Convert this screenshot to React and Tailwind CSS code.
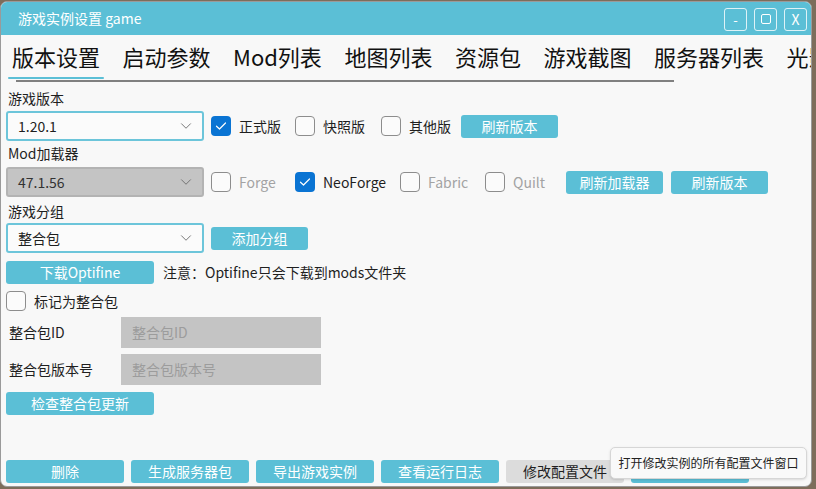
import { ChevronDown } from "lucide-react";

const tabs = ["版本设置", "启动参数", "Mod列表", "地图列表", "资源包", "游戏截图", "服务器列表", "光影包"];

function Check({ checked }) {
  if (checked) {
    return (
      <span className="flex h-[20px] w-[20px] shrink-0 items-center justify-center rounded-[4px] bg-[#0a74d3]">
        <svg width="12" height="10" viewBox="0 0 12 10" fill="none">
          <path d="M1.5 5.2 L4.5 8 L10.5 2" stroke="white" strokeWidth="1.2" strokeLinecap="round" strokeLinejoin="round" />
        </svg>
      </span>
    );
  }
  return <span className="h-[20px] w-[20px] shrink-0 rounded-[4px] border border-[#8d8d8d] bg-[#fbfbfb]" />;
}

function Option({ label, checked, disabled, width }) {
  return (
    <div className={`flex items-center gap-[8px] ${width}`}>
      <Check checked={checked} />
      <span className={disabled ? "text-[#a3a3a3]" : "text-[#1f1f1f]"}>{label}</span>
    </div>
  );
}

function Btn({ children, width = "w-[97px]", gray }) {
  return (
    <button
      className={`flex h-[23px] shrink-0 items-center justify-center rounded-[3px] text-[14px] ${width} ${
        gray ? "bg-[#dcdcdc] text-[#1f1f1f]" : "bg-[#5bbfd6] text-white"
      }`}
    >
      {children}
    </button>
  );
}

function Combo({ value, disabled }) {
  return (
    <div
      className={`flex h-[30px] w-[198px] shrink-0 items-center justify-between rounded-[3px] border-2 pl-[10px] pr-[7px] ${
        disabled ? "border-[#b3b3b3] bg-[#c4c4c4] text-[#333]" : "border-[#6cc5da] bg-[#fbfbfb] text-[#1f1f1f]"
      }`}
    >
      <span>{value}</span>
      <ChevronDown size={18} strokeWidth={1.2} color="#6b6b6b" />
    </div>
  );
}

export default function App() {
  return (
    <div
      className="h-[489px] w-[816px] overflow-hidden bg-[#7d6d5b] pt-[1px] text-[14px]"
      style={{ fontFamily: '"Noto Sans CJK SC", "Noto Sans", sans-serif' }}
    >
      <div className="relative flex h-[486px] w-[812px] flex-col overflow-hidden rounded-[7px] border border-[#9a9a9a] bg-[#f8f8f8]">
        {/* title bar */}
        <div className="flex h-[33px] shrink-0 items-center justify-between bg-[#5bbfd6] pl-[17px] pr-[4px]">
          <span className="text-[14px] text-white">游戏实例设置 game</span>
          <div className="flex gap-[7px] pt-[1px]">
            <span className="flex h-[23px] w-[23px] items-center justify-center rounded-[3px] border border-white/80 text-[13px] leading-none text-white">-</span>
            <span className="flex h-[23px] w-[23px] items-center justify-center rounded-[3px] border border-white/80">
              <span className="h-[10px] w-[10px] rounded-[2px] border border-white" />
            </span>
            <span className="flex h-[23px] w-[23px] items-center justify-center rounded-[3px] border border-white/80 text-[14px] leading-none text-white">X</span>
          </div>
        </div>

        {/* tabs */}
        <div className="flex shrink-0 gap-[14.5px] whitespace-nowrap pl-[7px]">
          {tabs.map((t, i) => (
            <div key={t} className="flex shrink-0 flex-col">
              <div className="flex h-[42px] items-center px-[4px] text-[22px] leading-none text-[#111]">{t}</div>
              <div className={`h-[2px] rounded-full ${i === 0 ? "bg-[#5bbfd6]" : ""}`} />
            </div>
          ))}
        </div>
        <div className="ml-[15px] mt-[1px] h-[2px] w-[658px] shrink-0 bg-[#808080]" />

        <div className="flex flex-1 flex-col px-[5px]">
          <div className="ml-[2px] mt-[7px] flex h-[18px] items-center text-[#1f1f1f]">游戏版本</div>
          <div className="mt-[4px] flex h-[30px] items-center">
            <Combo value="1.20.1" />
            <div className="ml-[7px] flex items-center">
              <Option label="正式版" checked width="w-[84px]" />
              <Option label="快照版" width="w-[86px]" />
              <Option label="其他版" width="w-[80px]" />
              <Btn>刷新版本</Btn>
            </div>
          </div>

          <div className="ml-[2px] mt-[3px] flex h-[18px] items-center text-[#1f1f1f]">Mod加载器</div>
          <div className="mt-[5px] flex h-[30px] items-center">
            <Combo value="47.1.56" disabled />
            <div className="ml-[7px] flex items-center">
              <Option label="Forge" disabled width="w-[84px]" />
              <Option label="NeoForge" checked width="w-[105px]" />
              <Option label="Fabric" disabled width="w-[85px]" />
              <Option label="Quilt" disabled width="w-[81px]" />
              <div className="flex gap-[8px]">
                <Btn>刷新加载器</Btn>
                <Btn>刷新版本</Btn>
              </div>
            </div>
          </div>

          <div className="ml-[2px] mt-[5px] flex h-[18px] items-center text-[#1f1f1f]">游戏分组</div>
          <div className="mt-[3px] flex h-[30px] items-center gap-[7px]">
            <Combo value="整合包" />
            <Btn>添加分组</Btn>
          </div>

          <div className="mt-[8px] flex items-center gap-[9px]">
            <Btn width="w-[148px]">下载Optifine</Btn>
            <span className="text-[#1f1f1f]">注意：Optifine只会下载到mods文件夹</span>
          </div>

          <div className="mt-[7px] flex h-[20px] items-center gap-[8px]">
            <Check />
            <span className="text-[#1f1f1f]">标记为整合包</span>
          </div>

          <div className="mt-[6px] flex h-[31px] items-center">
            <span className="ml-[3px] w-[112px] text-[#1f1f1f]">整合包ID</span>
            <div className="flex h-[31px] w-[200px] items-center bg-[#c4c4c4] pl-[11px] text-[#9c9c9c]">整合包ID</div>
          </div>
          <div className="mt-[6px] flex h-[31px] items-center">
            <span className="ml-[3px] w-[112px] text-[#1f1f1f]">整合包版本号</span>
            <div className="flex h-[31px] w-[200px] items-center bg-[#c4c4c4] pl-[11px] text-[#9c9c9c]">整合包版本号</div>
          </div>

          <div className="mt-[7px] flex">
            <Btn width="w-[148px]">检查整合包更新</Btn>
          </div>

          <div className="mb-[3px] mt-auto flex gap-[7px]">
            <Btn width="w-[118px]">删除</Btn>
            <Btn width="w-[118px]">生成服务器包</Btn>
            <Btn width="w-[118px]">导出游戏实例</Btn>
            <Btn width="w-[118px]">查看运行日志</Btn>
            <Btn width="w-[118px]" gray>修改配置文件</Btn>
            <Btn width="w-[118px]">打开文件夹</Btn>
          </div>
        </div>

        {/* tooltip */}
        <div className="absolute left-[609px] top-[445px] flex h-[32px] w-[197px] items-center justify-center rounded-[5px] border border-[#d6d6d6] bg-[#f9f9f9] text-[12px] text-[#222] shadow-sm">
          打开修改实例的所有配置文件窗口
        </div>
      </div>
    </div>
  );
}
